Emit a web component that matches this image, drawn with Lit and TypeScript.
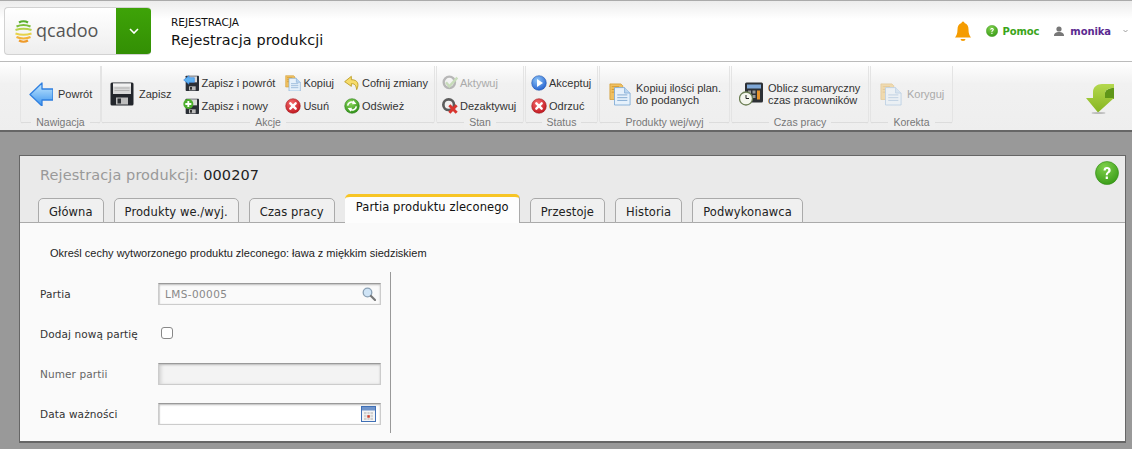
import { LitElement, css, html, svg } from "lit";
import { customElement } from "lit/decorators.js";

// small icon set, all drawn on a 24 unit grid
const arrowLeft = svg`<defs><linearGradient id="bl" x1="0" y1="0" x2="0" y2="1"><stop offset="0" stop-color="#c6eaff"/><stop offset="1" stop-color="#3b93ee"/></linearGradient></defs>
  <path d="M13 1 L1 12.5 L13 24 L13 18 L24 18 L24 7 L13 7 Z" fill="url(#bl)" stroke="#2f7fe0" stroke-width="1.3" stroke-linejoin="round"/>`;

const floppy = svg`<rect x="0.5" y="0.5" width="23" height="23" rx="1.5" fill="#23262c"/>
  <path d="M3 1.5h18v10.5H3z" fill="#d8d8d8"/><path d="M3 1.5h18v3H3z" fill="#f2f2f2"/>
  <path d="M4.5 6h15M4.5 8.5h15" stroke="#aaa" stroke-width=".8"/>
  <rect x="6" y="15.5" width="12" height="7" fill="#bdbdbd"/><rect x="7.5" y="16.5" width="3.5" height="5" fill="#2b2e33"/>`;

const badgeArrow = svg`<rect x="4" y="1" width="20" height="23" rx="1" fill="#2b2f36"/>
  <path d="M7 2h14v9H7z" fill="#d9d9d9"/><rect x="9" y="17" width="10" height="6" fill="#bbb"/><rect x="10.5" y="18" width="3" height="4" fill="#333"/>
  <path d="M9 1 L1 7.5 L9 14 V11 H17 V4 H9 Z" fill="#5fb2f2" stroke="#2f7fe0" stroke-width=".8"/>`;

const badgePlus = svg`<rect x="4" y="1" width="20" height="23" rx="1" fill="#2b2f36"/>
  <path d="M7 2h14v9H7z" fill="#d9d9d9"/><rect x="9" y="17" width="10" height="6" fill="#bbb"/><rect x="10.5" y="18" width="3" height="4" fill="#333"/>
  <circle cx="8" cy="9" r="7.5" fill="#4cae2c"/><path d="M8 4.5v9M3.5 9h9" stroke="#fff" stroke-width="2.8"/>`;

const copyDoc = svg`<path d="M1 1h12l2 2v15H1z" fill="#f0c060" stroke="#d09a30" stroke-width=".8"/>
  <path d="M3 4h8M3 7h8M3 10h8" stroke="#c98a20" stroke-width=".8"/>
  <path d="M6 5h11l6 6v13H6z" fill="#e6f1fb" stroke="#7ba7d4" stroke-width=".9"/><path d="M17 5v6h6" fill="#bcd6ef" stroke="#7ba7d4" stroke-width=".8"/>
  <path d="M9 13h11M9 16h11M9 19h11" stroke="#7ea6cf" stroke-width="1"/>`;

const copyFaded = svg`<g opacity=".45">${copyDoc}</g>`;

const undo = svg`<path d="M11 2 L1 10 L11 17 V13 C16 13 18 15 19 22 C23 14 21 7 11 7 Z" fill="#f7dc6a" stroke="#b99a1e" stroke-width="1.3" stroke-linejoin="round"/>`;

const redCross = svg`<defs><radialGradient id="rd" cx=".4" cy=".3" r=".8"><stop offset="0" stop-color="#f46a6a"/><stop offset="1" stop-color="#bb0f18"/></radialGradient></defs>
  <circle cx="12" cy="12" r="11" fill="url(#rd)" stroke="#9b1a1f" stroke-width=".8"/><path d="M8 8l8 8M16 8l-8 8" stroke="#fff" stroke-width="3.6" stroke-linecap="round"/>`;

const refresh = svg`<defs><radialGradient id="gr" cx=".4" cy=".3" r=".8"><stop offset="0" stop-color="#8bd65a"/><stop offset="1" stop-color="#268a12"/></radialGradient></defs>
  <circle cx="12" cy="12" r="11" fill="url(#gr)" stroke="#2b7d18" stroke-width=".8"/>
  <path d="M5.500 11.500C6 6.500 12 4.500 15.500 7.500" fill="none" stroke="#fff" stroke-width="2.400"/><path d="M14 3.500l4.500 5.500-6.500.5z" fill="#fff"/>
  <path d="M18.500 12.500C18 17.500 12 19.500 8.500 16.500" fill="none" stroke="#fff" stroke-width="2.400"/><path d="M10 20.500L5.500 15l6.500-.5z" fill="#fff"/>`;

const activate = svg`<g opacity=".42"><circle cx="11" cy="11" r="8.5" fill="none" stroke="#666" stroke-width="3.5"/>
  <path d="M6 11l5 6L23 4" fill="none" stroke="#8fbf70" stroke-width="3.6"/></g>`;

const deactivate = svg`<circle cx="10" cy="10" r="8" fill="none" stroke="#5c5c5c" stroke-width="4"/>
  <path d="M11 11l11 11M22 11L11 22" stroke="#d8352f" stroke-width="4.400"/>`;

const play = svg`<defs><radialGradient id="pl" cx=".4" cy=".3" r=".85"><stop offset="0" stop-color="#8cc4f8"/><stop offset="1" stop-color="#1552c8"/></radialGradient></defs>
  <circle cx="12" cy="12" r="11" fill="url(#pl)" stroke="#1b4fa8" stroke-width=".8"/><path d="M9 6l9 6-9 6z" fill="#fff"/>`;

const calc = svg`<rect x="6" y="1" width="18" height="20" rx="1.5" fill="#2d3035"/><rect x="8" y="3" width="14" height="4" fill="#7fa7d6"/>
  <path d="M9 9h3v3H9zM13.500 9h3v3h-3zM9 13.500h3v3H9zM13.500 13.500h3v3h-3z" fill="#999"/><path d="M18 9h3v9h-3z" fill="#e6932c"/>
  <circle cx="7" cy="17" r="6.500" fill="#f4f6ee" stroke="#6d7f55" stroke-width="1.3"/><path d="M7 13.500V17h3" fill="none" stroke="#222" stroke-width="1"/>`;

const greenDown = svg`<defs><linearGradient id="gd" x1="0" y1="0" x2="0" y2="1"><stop offset="0" stop-color="#b4d84e"/><stop offset="1" stop-color="#86b520"/></linearGradient></defs>
  <path d="M19 15V9C19 6 23 4 28 4V15Z" fill="#5f9618"/>
  <path d="M7 14V8C7 3 11 0 16 0H28V4C23 4 19 6 19 9V14H28L12 28.500 0 14Z" fill="url(#gd)"/>
  <ellipse cx="12.500" cy="29" rx="7" ry="1" fill="#bbb"/>`;

const bell = svg`<path d="M8 0.500a1.500 1.500 0 0 1 1.500 1.500c3 .8 4 3.500 4 6.500 0 4 1 6 2.500 8H0c1.500-2 2.500-4 2.500-8 0-3 1-5.700 4-6.500A1.500 1.500 0 0 1 8 .5z" fill="#f59c00"/>
  <path d="M5.500 18h5a2.500 2 0 0 1-5 0z" fill="#f59c00"/>`;

const user = svg`<circle cx="5" cy="3" r="2.600" fill="#777"/><path d="M0 10c0-3 2-4 5-4s5 1 5 4z" fill="#777"/>`;

const lens = svg`<circle cx="5.500" cy="5.500" r="4.300" fill="#cfe4f6" stroke="#8aa0b4" stroke-width="1.300"/>
  <path d="M9 9l4 4" stroke="#777" stroke-width="2.200" stroke-linecap="round"/>`;

const calendar = svg`<rect x=".5" y=".5" width="14" height="15" fill="#f4f4f4" stroke="#3f6fb5"/><rect x="1" y="1" width="13" height="3.500" fill="#6f94cb"/>
  <path d="M3 6h9v8H3z" fill="#cfcfcf"/><path d="M6 6v8M9 6v8M3 8.700h9M3 11.300h9" stroke="#f8f8f8" stroke-width=".8"/><rect x="6.300" y="9.200" width="2.500" height="2.500" fill="#d0402c"/>`;

const helpDisc = (id: string) => svg`<defs><radialGradient id=${id} cx=".4" cy=".25" r=".9"><stop offset="0" stop-color="#7fd04c"/><stop offset="1" stop-color="#2f9410"/></radialGradient></defs>
  <circle cx="12" cy="12" r="11.500" fill="url(#${id})" stroke="#2f8c12" stroke-width=".6"/>
  <path d="M8.500 9.500C8.500 7 10 6 12 6s3.700 1 3.700 3.200c0 2.800-3 2.600-3 5H10.800c0-3.400 2.500-3.200 2.500-5 0-.9-.5-1.300-1.300-1.300s-1.300.6-1.300 1.600zM10.700 15.500h2.200v2.400h-2.200z" fill="#fff"/>`;

const tabs = ["Główna", "Produkty we./wyj.", "Czas pracy", "Partia produktu zleconego", "Przestoje", "Historia", "Podwykonawca"];

@customElement("app-root")
export class AppRoot extends LitElement {
  static styles = css`
    :host {
      display: block;
      min-height: 449px;
      background: #999;
      font-family: "DejaVu Sans", sans-serif;
      overflow: hidden;
    }
    svg { display: block; flex: none; }

    /* top bar */
    .top {
      height: 60px;
      border-top: 1px solid #aaa;
      border-bottom: 1px solid #bbb;
      background: linear-gradient(#ececec, #fff 18px);
      display: flex;
      align-items: center;
      padding: 0 4px 0 4px;
    }
    .logo {
      width: 147px;
      height: 48px;
      box-sizing: border-box;
      border: 1px solid #d2d2d2;
      border-right: none;
      border-radius: 4px;
      background: linear-gradient(#fff, #eee);
      display: flex;
      overflow: hidden;
    }
    .logo-mark { flex: 1; display: flex; align-items: center; padding-left: 10px; gap: 4px; }
    .logo-text { font: 18px "Open Sans", sans-serif; color: #555; position: relative; top: -1px; }
    .logo-btn { width: 35px; background: linear-gradient(#3ea308, #338f04); display: flex; align-items: center; justify-content: center; }
    .crumb { margin-left: 20px; color: #111; padding-top: 3px; }
    .crumb-small { font-size: 10.500px; line-height: 15px; letter-spacing: 0; }
    .crumb-big { font-size: 14.400px; line-height: 20px; letter-spacing: .1px; }
    .top-right { margin-left: auto; display: flex; align-items: center; font-size: 10px; font-weight: bold; }
    .help { color: #3aa51a; margin: 0 15px 0 4px; letter-spacing: -.1px; }
    .name { color: #5b2a91; margin: 0 12px 0 6px; letter-spacing: -.1px; }
    .bell { margin-right: 15px; }

    /* toolbar */
    .bar {
      height: 70px;
      box-sizing: border-box;
      border-bottom: 2px solid #666;
      background: linear-gradient(#fff, #f1f1f1 22px, #eee);
      display: flex;
      padding: 4px 0 0 20px;
      font: 11px "Liberation Sans", sans-serif;
      color: #333;
      position: relative;
    }
    .group {
      height: 58px;
      box-sizing: border-box;
      border-left: 1px solid #e4e4e4;
      border-right: 1px solid #e4e4e4;
      border-radius: 0 0 4px 4px;
      display: flex;
      flex-direction: column;
      margin-right: 1px;
    }
    .w-nav { width: 81px; margin-right: 0; }
    .w-act { width: 334px; }
    .w-stan { width: 88px; }
    .w-stat { width: 73px; }
    .w-prod { width: 131px; }
    .w-time { width: 138px; }
    .w-kor { width: 83px; }
    .content { flex: 1; display: flex; align-items: center; padding-bottom: 1px; }
    .caption {
      height: 1px;
      background: #dcdcdc;
      display: flex;
      justify-content: center;
      align-items: center;
      color: #777;
      font-size: 10.500px;
      margin-bottom: 1px;
    }
    .caption span { background: #efefef; padding: 0 5px; line-height: 11px; }
    .btn { display: flex; align-items: center; gap: 5px; }
    .col { display: flex; flex-direction: column; gap: 7px; margin-top: 2px; }
    .small { gap: 2px; height: 16px; }
    .off { color: #aaa; }
    .ml5 { margin-left: 5px; }
    .ml7 { margin-left: 7px; }
    .ml8 { margin-left: 8px; }
    .ml9 { margin-left: 9px; }
    .ml10 { margin-left: 10px; }
    .ml12 { margin-left: 12px; }
    .two { line-height: 12px; }
    .drop { position: absolute; left: 1086px; top: 22px; }

    /* panel */
    .panel {
      margin: 23px 6px 5px 19px;
      height: 288px;
      box-sizing: border-box;
      border: 1px solid #666;
      border-bottom-width: 2px;
      background: #fafafa;
      display: flex;
      flex-direction: column;
      position: relative;
    }
    .head { height: 67px; background: #eaeaea; border-bottom: 1px solid #aaa; box-sizing: border-box; position: relative; }
    .title { font-size: 14.500px; line-height: 18px; padding: 10px 0 0 20px; color: #999; letter-spacing: .1px; }
    .title b { font-weight: normal; color: #222; }
    .q { position: absolute; right: 6px; top: 5px; }
    .tabs { position: absolute; left: 18px; bottom: -1px; display: flex; align-items: flex-end; gap: 10px; font-size: 11.500px; color: #222; }
    .tab {
      height: 25px;
      box-sizing: border-box;
      padding: 0 10px;
      border: 1px solid #aaa;
      border-bottom: 1px solid #aaa;
      border-radius: 5px 5px 0 0;
      background: #f0f0f0;
      line-height: 26px;
      letter-spacing: .1px;
    }
    .tab.active {
      height: 29px;
      padding: 0 10px 0 11px;
      border: none;
      border-top: 3px solid #f7c525;
      border-right: 1px solid #aaa;
      background: #fdfdfd;
      line-height: 21px;
      color: #111;
    }
    .note { font: 11px "Liberation Sans", sans-serif; color: #222; padding: 24px 0 0 30px; line-height: 13px; }
    .form {
      position: absolute;
      left: 0;
      top: 116px;
      width: 371px;
      height: 161px;
      box-sizing: border-box;
      border-right: 1px solid #999;
      padding: 11px 0 0 20px;
      display: grid;
      grid-template-columns: 118px 223px;
      grid-auto-rows: 22px;
      row-gap: 18px;
      align-items: center;
      font-size: 10.500px;
      color: #333;
      letter-spacing: .1px;
    }
    .dim { color: #666; }
    .input {
      height: 22px;
      box-sizing: border-box;
      border: 1px solid #ccc;
      border-top-color: #999;
      box-shadow: inset 0 1px 2px #bbb, inset 1px 0 1px #ddd;
      display: flex;
      align-items: center;
      justify-content: space-between;
      padding: 0 4px 0 6px;
      background: #fff;
    }
    .lookup { background: #fafafa; color: #888; font-size: 10.500px; letter-spacing: .4px; }
    .ro { background: #f3f3f3; box-shadow: inset 0 1px 2px #bbb, inset 3px 0 3px #ddd; }
    .check { width: 12px; height: 12px; box-sizing: border-box; border: 1px solid #888; border-radius: 3px; background: #fff; margin: -2px 0 0 3px; }
  `;

  private big(icon: unknown, label: string, w = 24, h = 24) {
    return html`<div class="btn"><svg width=${w} height=${h} viewBox="0 0 24 24">${icon}</svg><span>${label}</span></div>`;
  }

  private mini(icon: unknown, label: string, off = false) {
    return html`<div class="btn small ${off ? "off" : ""}"><svg width="16" height="16" viewBox="0 0 24 24">${icon}</svg><span>${label}</span></div>`;
  }

  render() {
    return html`
      <div class="top">
        <div class="logo">
          <div class="logo-mark">
            <svg width="17" height="23" viewBox="0 0 17 23" fill="none" stroke-width="2.200">
              <path d="M4 2.500Q8.500 0 13 2.500" stroke="#58ad2c"/>
              <path d="M1.500 6.500Q8.500 3.500 15.500 6.500" stroke="#7dbe3c"/>
              <path d="M.5 10Q8.500 7.500 16.500 10" stroke="#b6d24d"/>
              <path d="M.5 13.500Q8.500 16 16.500 13.500" stroke="#e6d24a"/>
              <path d="M1.500 17Q8.500 20 15.500 17" stroke="#f3b33a"/>
              <path d="M4 20.500Q8.500 23 13 20.500" stroke="#ee9a2a"/>
            </svg>
            <span class="logo-text">qcadoo</span>
          </div>
          <div class="logo-btn">
            <svg width="10" height="6" viewBox="0 0 10 6"><path d="M1 1l4 4 4-4" fill="none" stroke="#fff" stroke-width="1.600"/></svg>
          </div>
        </div>
        <div class="crumb">
          <div class="crumb-small">REJESTRACJA</div>
          <div class="crumb-big">Rejestracja produkcji</div>
        </div>
        <div class="top-right">
          <svg class="bell" width="16" height="20" viewBox="0 0 16 20">${bell}</svg>
          <svg width="12" height="12" viewBox="0 0 24 24">${helpDisc("h1")}</svg>
          <span class="help">Pomoc</span>
          <svg width="10" height="10" viewBox="0 0 10 10">${user}</svg>
          <span class="name">monika</span>
          <svg width="5" height="4" viewBox="0 0 5 4"><path d="M.5 1l2 2 2-2" fill="none" stroke="#888" stroke-width=".8"/></svg>
        </div>
      </div>

      <div class="bar">
        <div class="group w-nav">
          <div class="content ml8">${this.big(arrowLeft, "Powrót")}</div>
          <div class="caption"><span>Nawigacja</span></div>
        </div>
        <div class="group w-act">
          <div class="content ml8">
            ${this.big(floppy, "Zapisz")}
            <div class="col ml12">
              ${this.mini(badgeArrow, "Zapisz i powrót")}
              ${this.mini(badgePlus, "Zapisz i nowy")}
            </div>
            <div class="col ml10">
              ${this.mini(copyDoc, "Kopiuj")}
              ${this.mini(redCross, "Usuń")}
            </div>
            <div class="col ml10">
              ${this.mini(undo, "Cofnij zmiany")}
              ${this.mini(refresh, "Odśwież")}
            </div>
          </div>
          <div class="caption"><span>Akcje</span></div>
        </div>
        <div class="group w-stan">
          <div class="content ml5">
            <div class="col">
              ${this.mini(activate, "Aktywuj", true)}
              ${this.mini(deactivate, "Dezaktywuj")}
            </div>
          </div>
          <div class="caption"><span>Stan</span></div>
        </div>
        <div class="group w-stat">
          <div class="content ml5">
            <div class="col">
              ${this.mini(play, "Akceptuj")}
              ${this.mini(redCross, "Odrzuć")}
            </div>
          </div>
          <div class="caption"><span>Status</span></div>
        </div>
        <div class="group w-prod">
          <div class="content ml9">
            <div class="btn">
              <svg width="22" height="24" viewBox="0 0 24 24">${copyDoc}</svg>
              <span class="two">Kopiuj ilości plan.<br />do podanych</span>
            </div>
          </div>
          <div class="caption"><span>Produkty wej/wyj</span></div>
        </div>
        <div class="group w-time">
          <div class="content ml7">
            <div class="btn">
              <svg width="24" height="25" viewBox="0 0 24 24">${calc}</svg>
              <span class="two">Oblicz sumaryczny<br />czas pracowników</span>
            </div>
          </div>
          <div class="caption"><span>Czas pracy</span></div>
        </div>
        <div class="group w-kor">
          <div class="content ml9">
            <div class="btn off"><svg width="22" height="24" viewBox="0 0 24 24">${copyFaded}</svg><span>Koryguj</span></div>
          </div>
          <div class="caption"><span>Korekta</span></div>
        </div>
        <svg class="drop" width="28" height="30" viewBox="0 0 28 30">${greenDown}</svg>
      </div>

      <div class="panel">
        <div class="head">
          <div class="title">Rejestracja produkcji: <b>000207</b></div>
          <svg class="q" width="24" height="24" viewBox="0 0 24 24">${helpDisc("h2")}</svg>
          <div class="tabs">
            ${tabs.map((t, i) => html`<div class="tab ${i === 3 ? "active" : ""}">${t}</div>`)}
          </div>
        </div>
        <div class="note">Określ cechy wytworzonego produktu zleconego: ława z miękkim siedziskiem</div>
        <div class="form">
          <span>Partia</span>
          <div class="input lookup"><span>LMS-00005</span><svg width="14" height="14" viewBox="0 0 14 14">${lens}</svg></div>
          <span>Dodaj nową partię</span>
          <div class="check"></div>
          <span class="dim">Numer partii</span>
          <div class="input ro"></div>
          <span>Data ważności</span>
          <div class="input"><span></span><svg width="15" height="16" viewBox="0 0 15 16">${calendar}</svg></div>
        </div>
      </div>
    `;
  }
}
